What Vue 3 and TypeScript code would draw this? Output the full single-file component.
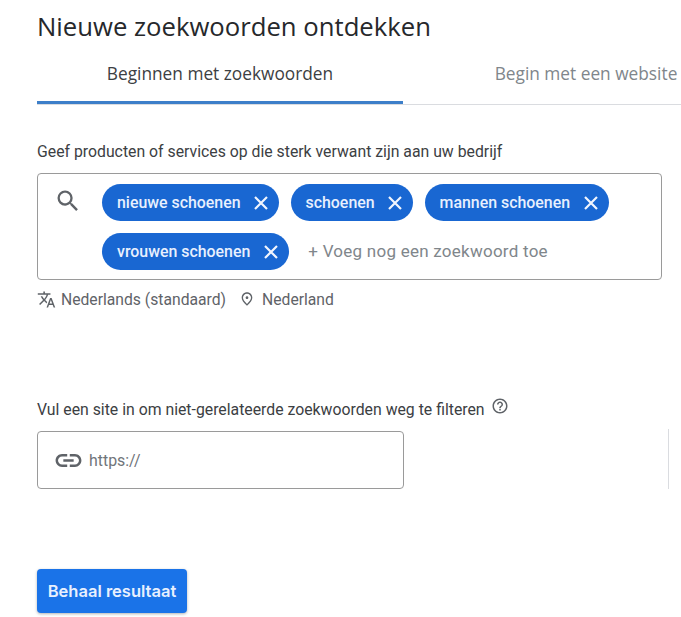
<script setup lang="ts">
const chips: string[] = ['nieuwe schoenen', 'schoenen', 'mannen schoenen', 'vrouwen schoenen']
</script>

<template>
  <main class="page">
    <h1 class="title">Nieuwe zoekwoorden ontdekken</h1>
    <div class="tabs">
      <div class="tab active">Beginnen met zoekwoorden</div>
      <div class="tab">Begin met een website</div>
    </div>

    <p class="label first">Geef producten of services op die sterk verwant zijn aan uw bedrijf</p>
    <div class="keyword-box">
      <svg class="search" viewBox="0 0 24 24" aria-hidden="true">
        <path d="M15.5 14h-.79l-.28-.27A6.47 6.47 0 0 0 16 9.5 6.5 6.5 0 1 0 9.5 16c1.61 0 3.09-.59 4.23-1.57l.27.28v.79l5 4.99L20.49 19l-4.99-5zm-6 0C7.01 14 5 11.99 5 9.5S7.01 5 9.5 5 14 7.01 14 9.5 11.99 14 9.5 14z" />
      </svg>
      <div class="chips">
        <span v-for="chip in chips" :key="chip" class="chip">
          {{ chip }}
          <svg class="close" viewBox="0 0 14 14" aria-hidden="true">
            <path d="M1 1l12 12M13 1L1 13" />
          </svg>
        </span>
        <span class="add">+ Voeg nog een zoekwoord toe</span>
      </div>
    </div>

    <div class="meta">
      <svg class="meta-icon" viewBox="0 0 24 24" aria-hidden="true">
        <path d="M12.87 15.07l-2.54-2.51.03-.03A17.52 17.52 0 0 0 14.07 6H17V4h-7V2H8v2H1v2h11.17C11.5 7.92 10.44 9.75 9 11.35 8.07 10.32 7.3 9.19 6.69 8h-2c.73 1.63 1.73 3.17 2.98 4.56l-5.09 5.02L4 19l5-5 3.11 3.11.76-2.04zM18.5 10h-2L12 22h2l1.12-3h4.75L21 22h2l-4.5-12zm-2.62 7l1.62-4.33L19.12 17h-3.24z" />
      </svg>
      <span>Nederlands (standaard)</span>
      <svg class="meta-icon pin" viewBox="0 0 24 24" aria-hidden="true">
        <path d="M12 12c-1.1 0-2-.9-2-2s.9-2 2-2 2 .9 2 2-.9 2-2 2zm6-1.8C18 6.57 15.35 4 12 4s-6 2.57-6 6.2c0 2.34 1.95 5.44 6 9.14 4.05-3.7 6-6.8 6-9.14zM12 2c4.2 0 8 3.22 8 8.2 0 3.32-2.67 7.25-8 11.8-5.33-4.55-8-8.48-8-11.8C4 5.22 7.8 2 12 2z" />
      </svg>
      <span>Nederland</span>
    </div>

    <p class="label second">
      Vul een site in om niet-gerelateerde zoekwoorden weg te filteren
      <svg class="help" viewBox="0 0 24 24" aria-hidden="true">
        <path d="M11 18h2v-2h-2v2zm1-16C6.48 2 2 6.48 2 12s4.48 10 10 10 10-4.48 10-10S17.52 2 12 2zm0 18c-4.41 0-8-3.59-8-8s3.59-8 8-8 8 3.59 8 8-3.59 8-8 8zm0-14c-2.21 0-4 1.79-4 4h2c0-1.1.9-2 2-2s2 .9 2 2c0 2-3 1.75-3 5h2c0-2.25 3-2.5 3-5 0-2.21-1.79-4-4-4z" />
      </svg>
    </p>
    <div class="site-row">
      <div class="site-input">
        <svg class="link" viewBox="0 0 24 24" aria-hidden="true">
          <path d="M3.9 12c0-1.71 1.39-3.1 3.1-3.1h4V7H7c-2.76 0-5 2.24-5 5s2.24 5 5 5h4v-1.9H7c-1.71 0-3.1-1.39-3.1-3.1zM8 13h8v-2H8v2zm9-6h-4v1.9h4c1.71 0 3.1 1.39 3.1 3.1s-1.39 3.1-3.1 3.1h-4V17h4c2.76 0 5-2.24 5-5s-2.24-5-5-5z" />
        </svg>
        <span>https://</span>
      </div>
      <div class="divider"></div>
    </div>

    <button class="submit" type="button">Behaal resultaat</button>
  </main>
</template>

<style scoped>
.page {
  width: 681px;
  height: 617px;
  overflow: hidden;
  padding: 12px 0 0 37px;
  box-sizing: border-box;
  background: #fff;
  font-family: Roboto, "Liberation Sans", sans-serif;
  color: #3c4043;
}
.title {
  margin: 0;
  font-family: "Open Sans", sans-serif;
  font-size: 25.7px;
  line-height: 30px;
  font-weight: 400;
  color: #26282b;
}
.tabs {
  display: flex;
  width: 644px;
  height: 62px;
  border-bottom: 1px solid #dadce0;
  box-sizing: content-box;
}
.tab {
  flex: 0 0 366px;
  height: 62px;
  box-sizing: border-box;
  padding-top: 22px;
  text-align: center;
  font-family: "Open Sans", sans-serif;
  font-size: 17.3px;
  line-height: 20px;
  font-weight: 500;
  white-space: nowrap;
  color: #80868b;
}
.tab.active {
  color: #3c4043;
  border-bottom: 3px solid #3d7fc9;
}
.label {
  margin: 0;
  font-size: 15.8px;
  line-height: 20px;
  color: #3c4043;
}
.label.first {
  margin-top: 37px;
}
.keyword-box {
  display: flex;
  width: 625px;
  height: 107px;
  margin-top: 11px;
  box-sizing: border-box;
  border: 1px solid #9a9a9a;
  border-radius: 4px;
  padding: 10px 0 0 16px;
}
.search {
  width: 28px;
  height: 28px;
  margin-top: 3px;
  flex: none;
  fill: #5f6368;
}
.chips {
  display: flex;
  flex-wrap: wrap;
  align-content: flex-start;
  gap: 12px 11.5px;
  margin-left: 20px;
}
.chip {
  display: inline-flex;
  align-items: center;
  justify-content: space-between;
  height: 37px;
  box-sizing: border-box;
  padding: 0 11px 0 15px;
  gap: 13.5px;
  border-radius: 19px;
  background: #1967d2;
  color: #e8f0fe;
  font-size: 15.9px;
  font-weight: 500;
  white-space: nowrap;
}
.close {
  width: 14px;
  height: 14px;
  fill: none;
  stroke: #f1f5fe;
  stroke-width: 2.2;
}
.add {
  display: inline-flex;
  align-items: center;
  height: 37px;
  padding-bottom: 1px;
  box-sizing: border-box;
  margin-left: 8px;
  color: #80868b;
  font-size: 17px;
  letter-spacing: 0.25px;
  white-space: nowrap;
}
.meta {
  display: flex;
  align-items: center;
  height: 20px;
  margin-top: 9px;
  font-size: 15.7px;
  color: #5f6368;
}
.meta-icon {
  width: 19px;
  height: 19px;
  fill: #5f6368;
  margin-right: 5px;
}
.meta-icon.pin {
  width: 16px;
  height: 16px;
  margin-left: 13px;
  margin-right: 7px;
}
.label.second {
  margin-top: 91px;
  display: flex;
  align-items: flex-start;
}
.help {
  width: 18px;
  height: 18px;
  margin: -3px 0 0 6px;
  fill: #5f6368;
}
.site-row {
  display: flex;
  align-items: flex-end;
  margin-top: 9px;
}
.site-input {
  display: flex;
  align-items: center;
  width: 367px;
  height: 58px;
  box-sizing: border-box;
  border: 1px solid #9a9a9a;
  border-radius: 4px;
  padding-left: 15px;
  color: #70757a;
  font-size: 15.9px;
}
.link {
  width: 31px;
  height: 31px;
  fill: #5f6368;
  margin-right: 5px;
}
.divider {
  width: 1px;
  height: 60px;
  margin-left: 264px;
  background: #dadce0;
}
.submit {
  display: block;
  width: 150px;
  height: 44px;
  margin-top: 80px;
  border: none;
  border-radius: 4px;
  background: #1a73e8;
  box-shadow: 0 1px 3px rgba(60, 64, 67, 0.4);
  color: #e8f0fe;
  font-family: Inter, sans-serif;
  font-size: 16.5px;
  font-weight: 600;
  padding: 0;
}
</style>
